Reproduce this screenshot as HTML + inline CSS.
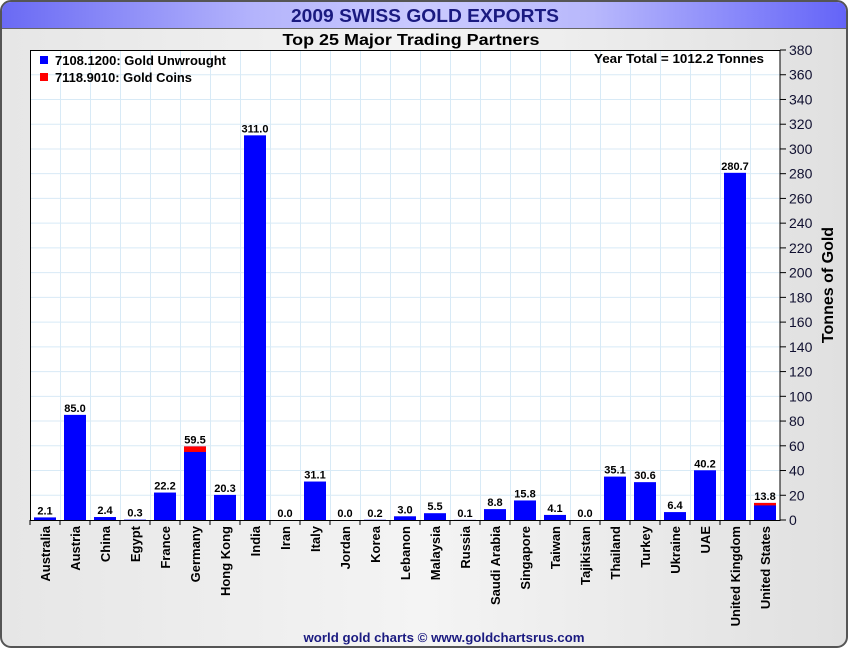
<!DOCTYPE html>
<html><head><meta charset="utf-8"><style>
body{margin:0;width:850px;height:650px;overflow:hidden;background:#fff;font-family:"Liberation Sans",sans-serif}
</style></head><body>
<svg width="850" height="650" xmlns="http://www.w3.org/2000/svg" font-family="Liberation Sans, sans-serif">
<defs>
<linearGradient id="tb" x1="0" x2="1" y1="0" y2="0">
<stop offset="0" stop-color="#6a6af4"/><stop offset="0.3" stop-color="#b4b4fc"/><stop offset="0.5" stop-color="#cacaff"/><stop offset="0.7" stop-color="#b8b8fc"/><stop offset="1" stop-color="#6464f8"/></linearGradient>
<linearGradient id="bg" x1="0" x2="1" y1="0" y2="0">
<stop offset="0" stop-color="#e6e6e6"/><stop offset="0.5" stop-color="#f4f4f4"/><stop offset="1" stop-color="#e0e0e0"/></linearGradient>
</defs>
<rect x="1" y="1" width="846" height="646" rx="10" fill="url(#bg)" stroke="#555" stroke-width="2"/>
<path d="M2 28 V12 Q2 2 12 2 H836 Q846 2 846 12 V28 Z" fill="url(#tb)"/>
<line x1="2" y1="28.5" x2="846" y2="28.5" stroke="#666"/>
<text x="425" y="22" text-anchor="middle" font-size="18" font-weight="bold" fill="#1a1a80" textLength="268" lengthAdjust="spacingAndGlyphs">2009 SWISS GOLD EXPORTS</text>
<text x="411" y="45" text-anchor="middle" font-size="16" font-weight="bold" fill="#000" textLength="257" lengthAdjust="spacingAndGlyphs">Top 25 Major Trading Partners</text>
<rect x="30" y="50" width="750" height="470" fill="#fff"/>
<g id="grid" stroke="#d8eaf6" stroke-width="1"></g>
<g id="bars"></g>
<rect x="30.5" y="50.5" width="749.5" height="470" fill="none" stroke="#000"/>
<g id="ax" font-size="14" fill="#101030"></g>
<g id="lbl" font-size="13" font-weight="bold" fill="#000"></g>
<rect x="40" y="56" width="8" height="8" fill="#0000ff"/>
<rect x="40" y="73" width="8" height="8" fill="#ff0000"/>
<text x="55" y="65" font-size="13" font-weight="bold" textLength="171" lengthAdjust="spacingAndGlyphs">7108.1200: Gold Unwrought</text>
<text x="55" y="82" font-size="13" font-weight="bold" textLength="137" lengthAdjust="spacingAndGlyphs">7118.9010: Gold Coins</text>
<text x="764" y="63" text-anchor="end" font-size="13" font-weight="bold" textLength="170" lengthAdjust="spacingAndGlyphs">Year Total = 1012.2 Tonnes</text>
<text transform="translate(833,285) rotate(-90)" text-anchor="middle" font-size="16" font-weight="bold">Tonnes of Gold</text>
<text x="444" y="642" text-anchor="middle" font-size="13" font-weight="bold" fill="#1a1a80" textLength="281" lengthAdjust="spacingAndGlyphs">world gold charts © www.goldchartsrus.com</text>
</svg>
<script>
var ns="http://www.w3.org/2000/svg";
function el(p,t,a,txt){var e=document.createElementNS(ns,t);for(var k in a)e.setAttribute(k,a[k]);if(txt!=null)e.textContent=txt;document.getElementById(p).appendChild(e);return e;}
var s=470/380;
for(var v=20;v<380;v+=20){var y=520-v*s;el('grid','line',{x1:30,x2:780,y1:y,y2:y});}
for(var i=1;i<25;i++){var x=30+i*30+0.5;el('grid','line',{x1:x,x2:x,y1:50,y2:520});}
for(var v=0;v<=380;v+=20){var y=520-v*s;el('ax','line',{x1:780,x2:786,y1:y,y2:y,stroke:'#000'});el('ax','text',{x:789,y:y+5},v);}
var d=[["Australia",2.1],["Austria",85.0],["China",2.4],["Egypt",0.3],["France",22.2],["Germany",59.5,4.5],["Hong Kong",20.3],["India",311.0],["Iran",0.0],["Italy",31.1],["Jordan",0.0],["Korea",0.2],["Lebanon",3.0],["Malaysia",5.5],["Russia",0.1],["Saudi Arabia",8.8],["Singapore",15.8],["Taiwan",4.1],["Tajikistan",0.0],["Thailand",35.1],["Turkey",30.6],["Ukraine",6.4],["UAE",40.2],["United Kingdom",280.7],["United States",13.8,2]];
d.forEach(function(r,i){var cx=45+30*i,v=r[1],red=r[2]||0;var top=520-v*s;
el('bars','rect',{x:cx-11,y:top,width:22,height:v*s,fill:'#0000ff'});
if(red)el('bars','rect',{x:cx-11,y:top,width:22,height:red*s,fill:'#ff0000'});
el('bars','line',{x1:cx-15,x2:cx-15,y1:520,y2:525,stroke:'#000'});
el('lbl','text',{x:cx,y:top-3,'text-anchor':'middle','font-size':'11'},v.toFixed(1));
el('lbl','text',{transform:'translate('+(cx+5)+',526) rotate(-90)','text-anchor':'end','font-weight':'bold'},r[0]);});
</script>
</body></html>
